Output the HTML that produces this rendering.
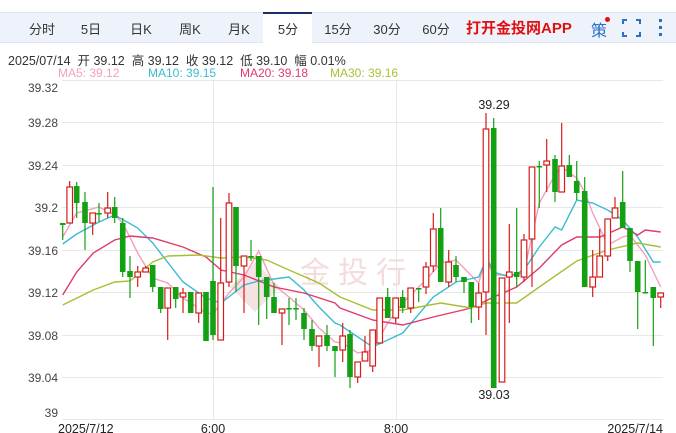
<!DOCTYPE html>
<html><head><meta charset="utf-8"><style>
body{margin:0;width:676px;height:433px;overflow:hidden;background:#fff;font-family:"Liberation Sans","Noto Sans CJK SC",sans-serif;position:relative}
.bar{position:absolute;left:0;top:12px;width:676px;height:31px;background:#eef3fb;border-top:1px solid #dfe6f2;border-bottom:1px solid #dfe6f2;box-sizing:border-box}
.t{position:absolute;top:19px;font-size:13px;color:#333;transform:translateX(-50%);white-space:nowrap}
.act{position:absolute;left:263px;top:12px;width:49px;height:32px;background:#fff;border-top:2px solid #1a2e6e;box-sizing:border-box}
.info{position:absolute;left:8px;top:50px;font-size:12.5px;color:#333;white-space:nowrap}
.ma{position:absolute;top:66px;font-size:12px;white-space:nowrap}
svg{position:absolute;left:0;top:0}
</style></head><body>
<div class="bar"></div>
<div class="act"></div>
<span class="t" style="left:42px">分时</span>
<span class="t" style="left:91px">5日</span>
<span class="t" style="left:141px">日K</span>
<span class="t" style="left:190px">周K</span>
<span class="t" style="left:239px">月K</span>
<span class="t" style="left:288px">5分</span>
<span class="t" style="left:338px">15分</span>
<span class="t" style="left:387px">30分</span>
<span class="t" style="left:436px">60分</span>
<span style="position:absolute;left:466px;top:17px;font-size:15px;font-weight:bold;color:#e01010;white-space:nowrap">打开金投网APP</span>
<span style="position:absolute;left:591px;top:17px;font-size:16px;color:#2b6fc6">策</span>
<div style="position:absolute;left:605px;top:17px;width:5px;height:5px;border-radius:50%;background:#e01010"></div>
<svg width="676" height="433" style="pointer-events:none">
<g stroke="#2b6fc6" stroke-width="2" fill="none">
<path d="M623 24v-4h4M636 20h4v4M640 32v4h-4M627 36h-4v-4"/>
</g>
<g fill="#2b6fc6"><rect x="659" y="19" width="3" height="3"/><rect x="659" y="26" width="3" height="3"/><rect x="659" y="33" width="3" height="3"/></g>
</svg>
<div class="info">2025/07/14&nbsp; 开 39.12&nbsp; 高 39.12&nbsp; 收 39.12&nbsp; 低 39.10&nbsp; 幅 0.01%</div>
<span class="ma" style="left:58px;color:#f2a0bd">MA5: 39.12</span>
<span class="ma" style="left:148px;color:#3bbcd2">MA10: 39.15</span>
<span class="ma" style="left:240px;color:#e03a6c">MA20: 39.18</span>
<span class="ma" style="left:330px;color:#a6c035">MA30: 39.16</span>
<svg id="ch" width="676" height="433">
<g stroke="#e8e8e8" stroke-width="1">
<line x1="62" y1="80.5" x2="663" y2="80.5"/><line x1="62" y1="122.5" x2="663" y2="122.5"/><line x1="62" y1="165.5" x2="663" y2="165.5"/><line x1="62" y1="207.5" x2="663" y2="207.5"/><line x1="62" y1="250.5" x2="663" y2="250.5"/><line x1="62" y1="292.5" x2="663" y2="292.5"/><line x1="62" y1="335.5" x2="663" y2="335.5"/><line x1="62" y1="377.5" x2="663" y2="377.5"/><line x1="62" y1="419.5" x2="663" y2="419.5"/>
<line x1="213.5" y1="80" x2="213.5" y2="420"/><line x1="396.5" y1="80" x2="396.5" y2="420"/>
</g>
<g font-size="12" fill="#444" text-anchor="end" font-family="Liberation Sans,sans-serif">
<text x="58" y="92">39.32</text><text x="58" y="127">39.28</text><text x="58" y="170">39.24</text><text x="58" y="212">39.2</text><text x="58" y="255">39.16</text><text x="58" y="297">39.12</text><text x="58" y="340">39.08</text><text x="58" y="382">39.04</text><text x="58" y="417">39</text>
</g>
<g font-size="12.5" fill="#222" font-family="Liberation Sans,sans-serif">
<text x="58" y="433">2025/7/12</text><text x="213" y="433" text-anchor="middle">6:00</text><text x="396" y="433" text-anchor="middle">8:00</text><text x="663" y="433" text-anchor="end">2025/7/14</text>
<text x="494" y="109" text-anchor="middle">39.29</text><text x="494" y="399" text-anchor="middle">39.03</text>
</g>
<text x="300" y="283" font-size="30" fill="#f5dcdc" font-family="Noto Sans CJK SC,sans-serif" letter-spacing="8">金投行</text>
<path d="M255 262l25 25-25 25-25-25z" fill="#f6e2e2"/>
<g id="ma"></g><g id="cd"></g>
</svg>
<script>
var C=[[62.7,223,225,223,240,'g'],[69.7,223,187,181,223,'r'],[76.7,186,203,182,218,'g'],[85,202,223,192,250,'g'],[92.7,223,213,213,235,'r'],[99,213,213,203,222,'g'],[107.7,213,208,192,218,'r'],[114.7,207,218,197,223,'g'],[122.7,223,272,218,277,'g'],[130,271,277,256,298,'g'],[137.7,277,272,266,287,'r'],[145.7,272,268,266,272,'r'],[152.7,265,287,265,292,'g'],[160.7,287,309,287,313,'g'],[167.7,308,288,288,340,'r'],[175.7,287,299,287,308,'g'],[183,297,293,288,313,'r'],[190.7,292,313,292,313,'g'],[198.7,313,293,293,323,'r'],[206,292,341,292,341,'g'],[213,281,335,187,340,'g'],[220.7,340,283,218,340,'r'],[229,282,203,193,287,'r'],[236,207,266,207,292,'g'],[244,266,256,256,313,'r'],[251,256,256,240,261,'g'],[258.7,256,277,256,325,'g'],[266.7,277,297,277,319,'g'],[274,297,313,283,313,'g'],[282,313,309,309,345,'r'],[289,308,308,298,325,'g'],[296,308,308,298,320,'g'],[304,313,329,308,340,'g'],[312,329,346,320,351,'g'],[319,346,336,336,367,'r'],[327,335,346,325,351,'g'],[335,346,351,346,377,'g'],[342.7,350,336,323,362,'r'],[350,334,377,330,388,'g'],[357.7,377,362,362,383,'r'],[365,361,352,336,361,'r'],[372.7,366,330,330,372,'r'],[379.7,343,298,298,343,'r'],[387.7,297,318,288,318,'g'],[395.7,318,298,298,323,'r'],[402.7,297,308,290,313,'g'],[410.7,308,288,288,313,'r'],[418.7,288,288,288,302,'g'],[426,287,267,262,294,'r'],[433.3,266,229,213,272,'r'],[440.7,228,282,208,282,'g'],[448.7,282,262,250,287,'r'],[456,265,277,256,282,'g'],[464,277,282,277,293,'g'],[471.3,282,307,282,323,'g'],[478.7,307,293,283,320,'r'],[486,292,129,113,335,'r'],[493.7,128,388,118,388,'g'],[502,382,278,278,382,'r'],[509.3,277,272,224,323,'r'],[516.7,272,277,208,287,'g'],[524,277,240,234,282,'r'],[532,239,167,167,287,'r'],[539.3,166,166,161,208,'g'],[546.7,165,161,139,192,'r'],[555,159,192,155,202,'g'],[561.7,192,166,123,192,'r'],[569.3,165,177,155,177,'g'],[576.7,181,193,161,200,'g'],[584.7,191,287,177,287,'g'],[592.7,287,277,250,297,'r'],[599.7,277,256,229,277,'r'],[607.7,256,219,219,261,'r'],[615,218,208,197,218,'r'],[622.7,202,228,171,228,'g'],[630,228,261,228,272,'g'],[637.7,261,292,261,329,'g'],[645.3,292,292,260,292,'g'],[653.3,287,298,287,346,'g'],[660.7,297,293,293,308,'r']];
var M=[['#f2a0bd','62.7,237 76.7,213 99,207 114.7,215 122.7,223 137.7,253 152.7,278 167.7,283 183,298 206,313 213,314 229,293 244,277 258.7,251 274,285 289,297 304,310 319,328 335,342 342.7,343 357.7,353 372.7,350 387.7,323 402.7,303 426,280 440.7,263 456,260 478.7,283 486,258 493.7,275 516.7,275 524,272 539.3,203 555,175 561.7,167 576.7,178 584.7,192 592.7,213 607.7,245 622.7,237 630,235 645.3,255 660.7,287'],
['#3bbcd2','62.7,244 76.7,234 99,222 114.7,215 137.7,228 152.7,243 183,282 206,298 221,303 244,285 258.7,281 289,277 304,290 319,307 335,323 340,325 372.7,347 402.7,333 433.3,297 456,282 478.7,277 486.7,258 493.7,272 509.3,277 524,270 539.3,247 555,227 561.7,230 576.7,200 592.7,203 607.7,210 622.7,220 637.7,237 653.3,262 660.7,262'],
['#e03a6c','62.7,295 76.7,272 93.3,253 114.7,240 130,236 152.7,238 183,247 206,257 221,270 244,275 274,287 304,293 335,303 340,308 372.7,320 402.7,325 433.3,317 471.3,308 493.7,297 516.7,287 539.3,268 561.7,245 576.7,237 600,237 622.7,227 637.7,235 645.3,230 660.7,232'],
['#a6c035','62.7,305 93.3,290 114.7,282 130,281 152.7,262 168,256 198.7,255 221,258 244,257 266.7,260 289,270 319,283 340,297 372.7,310 402.7,310 440.7,303 471.3,308 486,303 516.7,303 539.3,287 576.7,261 607.7,250 637.7,243 660.7,247']];
var ns='http://www.w3.org/2000/svg',cd=document.getElementById('cd'),ma=document.getElementById('ma');
C.forEach(function(c){var x=c[0],col=c[5]=='g'?'#13a013':'#d41c1c';
var l=document.createElementNS(ns,'line');l.setAttribute('x1',x);l.setAttribute('x2',x);l.setAttribute('y1',c[3]);l.setAttribute('y2',c[4]);l.setAttribute('stroke',col);l.setAttribute('stroke-width','1.2');cd.appendChild(l);
var t=Math.min(c[1],c[2]),h=Math.max(Math.abs(c[1]-c[2]),1.5),r=document.createElementNS(ns,'rect');r.setAttribute('x',x-2.8);r.setAttribute('width',5.6);r.setAttribute('y',t);r.setAttribute('height',h);
if(c[5]=='g'){r.setAttribute('fill',col);}else{r.setAttribute('fill','#fff');r.setAttribute('stroke',col);r.setAttribute('stroke-width','1.2');}cd.appendChild(r);});
M.forEach(function(m){var p=document.createElementNS(ns,'polyline');p.setAttribute('points',m[1]);p.setAttribute('fill','none');p.setAttribute('stroke',m[0]);p.setAttribute('stroke-width','1.4');ma.appendChild(p);});
</script>
</body></html>
